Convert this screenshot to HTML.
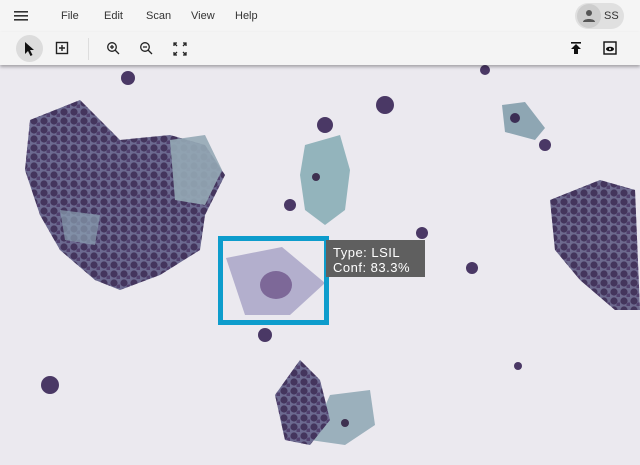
<!DOCTYPE html>
<html><head><style>
body{margin:0;width:640px;height:465px;overflow:hidden;background:#ebe8ee;font-family:"Liberation Sans",sans-serif;position:relative}
.top{position:absolute;left:0;top:0;width:640px;height:32px;background:#f5f5f5}
.menu{position:absolute;top:10px;font-size:11px;color:#333}
.tb{position:absolute;left:0;top:32px;width:640px;height:33px;background:#f4f4f4;box-shadow:0 2px 3px rgba(0,0,0,.3);z-index:2}
.img{position:absolute;left:0;top:65px}
</style></head><body>
<div class="top">
<svg style="position:absolute;left:14px;top:10px" width="16" height="12"><rect y="1" width="14" height="1.6" fill="#333"/><rect y="5" width="14" height="1.6" fill="#333"/><rect y="9" width="14" height="1.6" fill="#333"/></svg>
<span class="menu" style="left:61px">File</span><span class="menu" style="left:104px">Edit</span><span class="menu" style="left:146px">Scan</span><span class="menu" style="left:191px">View</span><span class="menu" style="left:235px">Help</span>
<div style="position:absolute;left:575px;top:3px;width:49px;height:26px;border-radius:13px;background:#e0e0e0"></div>
<div style="position:absolute;left:577px;top:4px;width:24px;height:24px;border-radius:12px;background:#cdcdcd"></div>
<svg style="position:absolute;left:581px;top:8px" width="16" height="16"><circle cx="8" cy="5" r="3" fill="#555"/><path d="M2 14c0-4 12-4 12 0z" fill="#555"/></svg>
<span class="menu" style="left:604px;top:10px">SS</span>
</div>
<div class="tb">
<div style="position:absolute;left:16px;top:3px;width:27px;height:27px;border-radius:14px;background:#dcdcdc"></div>
<svg style="position:absolute;left:24px;top:9px" width="12" height="16"><path d="M1 1v12l3-3 2.5 5 2-1-2.5-5h4z" fill="#111"/></svg>
<svg style="position:absolute;left:55px;top:9px" width="15" height="15"><rect x="1.5" y="1.5" width="11" height="11" fill="none" stroke="#222" stroke-width="1.4"/><path d="M7 4v6M4 7h6" stroke="#222" stroke-width="1.4"/></svg>
<div style="position:absolute;left:88px;top:6px;width:1px;height:22px;background:#ddd"></div>
<svg style="position:absolute;left:106px;top:9px" width="15" height="15"><circle cx="6" cy="6" r="4.3" fill="none" stroke="#222" stroke-width="1.3"/><path d="M9 9l4 4M6 4v4M4 6h4" stroke="#222" stroke-width="1.3"/></svg>
<svg style="position:absolute;left:139px;top:9px" width="15" height="15"><circle cx="6" cy="6" r="4.3" fill="none" stroke="#222" stroke-width="1.3"/><path d="M9 9l4 4M4 6h4" stroke="#222" stroke-width="1.3"/></svg>
<svg style="position:absolute;left:173px;top:10px" width="14" height="14"><path d="M1 4V1h3M10 1h3v3M13 10v3h-3M4 13H1v-3M1 1l3 3M13 1l-3 3M13 13l-3-3M1 13l3-3" fill="none" stroke="#222" stroke-width="1.3"/></svg>
<svg style="position:absolute;left:570px;top:9px" width="13" height="15"><rect x="1" y="1" width="10" height="1.6" fill="#111"/><path d="M6 3l-5 5h3v5h4V8h3z" fill="#111"/></svg>
<svg style="position:absolute;left:603px;top:9px" width="15" height="15"><rect x="1" y="1" width="12" height="12" fill="none" stroke="#111" stroke-width="1.4"/><ellipse cx="7" cy="8" rx="4" ry="2.3" fill="#111"/><circle cx="7" cy="8" r="1" fill="#fff"/></svg>
</div>
<svg class="img" width="640" height="400" viewBox="0 65 640 400">
<defs>
<pattern id="d" width="10" height="9" patternUnits="userSpaceOnUse"><circle cx="4" cy="4" r="3.6" fill="#3a2850"/><circle cx="9" cy="8" r="2.6" fill="#4a3565"/></pattern>
</defs>
<rect x="0" y="65" width="640" height="400" fill="#ebe9ef"/>
<path d="M30 120 L80 100 120 140 170 135 205 145 225 175 205 215 200 250 160 275 120 290 95 280 60 250 40 215 25 170 Z" fill="#6c6a90"/>
<path d="M30 120 L80 100 120 140 170 135 205 145 225 175 205 215 200 250 160 275 120 290 95 280 60 250 40 215 25 170 Z" fill="url(#d)" opacity=".8"/>
<path d="M170 140 L205 135 222 170 205 205 175 200 Z" fill="#95a8b5" opacity=".9"/>
<path d="M60 210 L100 215 95 245 65 240Z" fill="#8aa0b0" opacity=".7"/>
<path d="M305 145 L340 135 350 170 345 210 325 225 305 210 300 175 Z" fill="#93b4bc"/>
<circle cx="316" cy="177" r="4" fill="#3e3050"/>
<g fill="#4a3865">
<circle cx="290" cy="205" r="6"/><circle cx="325" cy="125" r="8"/><circle cx="545" cy="145" r="6"/>
<circle cx="385" cy="105" r="9"/><circle cx="128" cy="78" r="7"/><circle cx="485" cy="70" r="5"/>
<circle cx="472" cy="268" r="6"/><circle cx="422" cy="233" r="6"/><circle cx="50" cy="385" r="9"/>
<circle cx="265" cy="335" r="7"/><circle cx="518" cy="366" r="4"/>
</g>
<path d="M226 258 L282 247 325 283 290 315 245 315 Z" fill="#b3afcd"/>
<ellipse cx="276" cy="285" rx="16" ry="14" fill="#7d6898"/>
<path d="M502 105 L525 102 545 128 535 140 505 132 Z" fill="#8ea6b3"/>
<circle cx="515" cy="118" r="5" fill="#3c2e55"/>
<path d="M550 200 L600 180 635 190 640 310 615 310 580 280 555 250 Z" fill="#6d6a8e"/>
<path d="M550 200 L600 180 635 190 640 310 615 310 580 280 555 250 Z" fill="url(#d)" opacity=".8"/>
<path d="M330 395 L370 390 375 425 345 445 310 440 Z" fill="#9bb0bc"/>
<path d="M275 395 L300 360 320 380 330 420 310 445 285 440 Z" fill="#6c6a90"/>
<path d="M275 395 L300 360 320 380 330 420 310 445 285 440 Z" fill="url(#d)" opacity=".8"/>
<circle cx="345" cy="423" r="4" fill="#3e3050"/>
<rect x="220.5" y="238.5" width="106" height="84" fill="none" stroke="#0d9ccc" stroke-width="5"/>
<rect x="326" y="240" width="99" height="37" fill="#5f5f5f"/>
<text x="333" y="257" font-family="Liberation Sans" font-size="13" fill="#fff" letter-spacing=".5">Type: LSIL</text>
<text x="333" y="272" font-family="Liberation Sans" font-size="13" fill="#fff" letter-spacing=".5">Conf: 83.3%</text>
</svg>
</body></html>
